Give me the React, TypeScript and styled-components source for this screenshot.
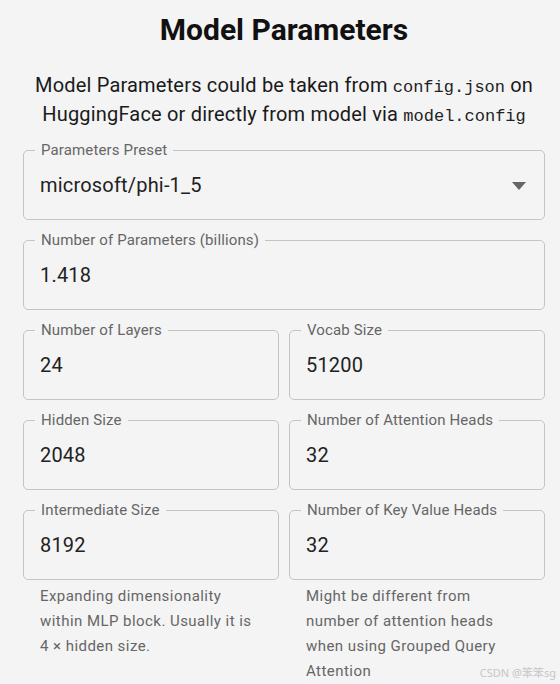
import React from "react";
import styled, { createGlobalStyle } from "styled-components";

const Global = createGlobalStyle`
  html, body { margin: 0; padding: 0; background: #f4f4f4; }
  body { font-family: Roboto, "Noto Sans", Arial, sans-serif; }
`;

const Page = styled.div`
  position: relative;
  width: 560px;
  height: 684px;
  box-sizing: border-box;
  padding: 0 15px 0 23px;
  background: #f4f4f4;
  overflow: hidden;
`;

const Title = styled.h1`
  margin: 0;
  padding-top: 12px;
  text-align: center;
  font-family: Roboto, Arial, sans-serif;
  font-weight: 700;
  font-size: 30px;
  line-height: 36px;
  color: #111;
`;

const Description = styled.p`
  margin: 23px 0 0;
  text-align: center;
  font-size: 20px;
  line-height: 29px;
  letter-spacing: 0.00938em;
  color: #1a1a1a;
`;

const Code = styled.code`
  font-family: "Liberation Mono", "Courier New", monospace;
  font-size: 17px;
  line-height: 20px;
  letter-spacing: 0;
  color: #222;
`;

const Grid = styled.div`
  display: grid;
  grid-template-columns: 1fr 1fr;
  column-gap: 10px;
  row-gap: 20px;
  margin-top: 21px;
`;

const Cell = styled.div<{ $wide?: boolean }>`
  grid-column: ${(p) => (p.$wide ? "1 / span 2" : "auto")};
  display: flex;
  flex-direction: column;
`;

const Field = styled.div`
  position: relative;
  height: 70px;
  box-sizing: border-box;
  border: 1px solid #c4c4c4;
  border-radius: 5px;
  display: flex;
  align-items: center;
  justify-content: space-between;
  padding: 0 18px 0 16px;
`;

const Label = styled.span`
  position: absolute;
  top: -10px;
  left: 11px;
  padding: 0 6px;
  background: #f4f4f4;
  font-size: 15px;
  line-height: 18px;
  letter-spacing: 0.00938em;
  color: #666;
  white-space: nowrap;
`;

const Value = styled.span`
  font-size: 20px;
  color: #222;
  letter-spacing: 0.00938em;
`;

const Arrow = styled.svg`
  width: 14px;
  height: 8px;
  fill: #666;
  margin-top: 1px;
`;

const Helper = styled.div`
  padding: 4px 18px 0 17px;
  font-size: 15px;
  line-height: 25px;
  letter-spacing: 0.03em;
  color: #666;
`;

const Watermark = styled.span`
  position: absolute;
  right: 4px;
  bottom: 4px;
  font-family: "Noto Sans", "Noto Sans CJK SC", sans-serif;
  font-size: 11px;
  color: #c6c6c6;
`;

type F = { label: string; value: string; wide?: boolean; select?: boolean; helper?: string };

const fields: F[] = [
  { label: "Parameters Preset", value: "microsoft/phi-1_5", wide: true, select: true },
  { label: "Number of Parameters (billions)", value: "1.418", wide: true },
  { label: "Number of Layers", value: "24" },
  { label: "Vocab Size", value: "51200" },
  { label: "Hidden Size", value: "2048" },
  { label: "Number of Attention Heads", value: "32" },
  {
    label: "Intermediate Size",
    value: "8192",
    helper: "Expanding dimensionality within MLP block. Usually it is 4 × hidden size.",
  },
  {
    label: "Number of Key Value Heads",
    value: "32",
    helper: "Might be different from number of attention heads when using Grouped Query Attention",
  },
];

export default function App() {
  return (
    <>
      <Global />
      <Page>
        <Title>Model Parameters</Title>
        <Description>
          Model Parameters could be taken from <Code>config.json</Code> on HuggingFace or directly
          from model via <Code>model.config</Code>
        </Description>
        <Grid>
          {fields.map((f) => (
            <Cell key={f.label} $wide={f.wide}>
              <Field>
                <Label>{f.label}</Label>
                <Value>{f.value}</Value>
                {f.select && (
                  <Arrow viewBox="0 0 14 8">
                    <path d="M0 0h14L7 8z" />
                  </Arrow>
                )}
              </Field>
              {f.helper && <Helper>{f.helper}</Helper>}
            </Cell>
          ))}
        </Grid>
        <Watermark>CSDN @笨笨sg</Watermark>
      </Page>
    </>
  );
}
